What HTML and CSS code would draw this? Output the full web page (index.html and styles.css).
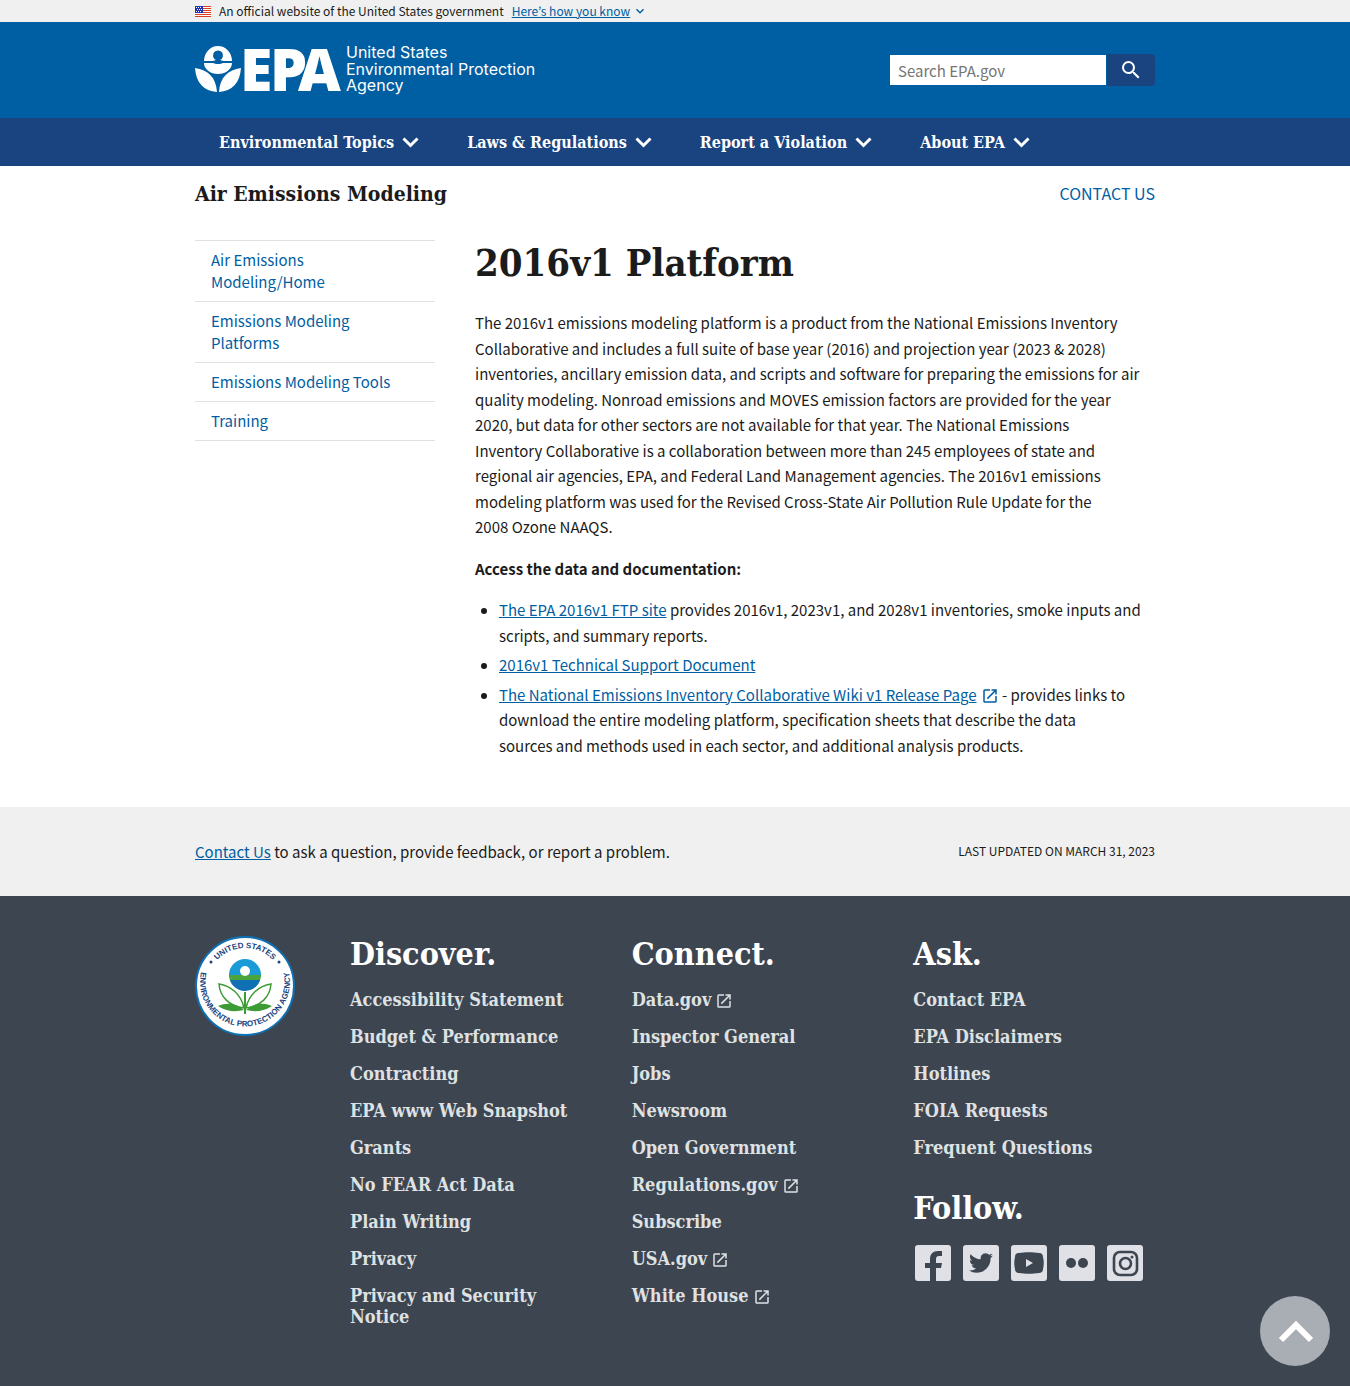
FILE: index.html
```html
<!DOCTYPE html>
<html lang="en">
<head>
<meta charset="utf-8">
<meta name="viewport" content="width=device-width, initial-scale=1">
<title>2016v1 Platform | US EPA</title>
<link rel="stylesheet" href="styles.css">
</head>
<body>
<svg class="sprite" aria-hidden="true">
  <symbol id="launch" viewBox="0 0 24 24"><path fill="currentColor" d="M19 19H5V5h7V3H5a2 2 0 0 0-2 2v14a2 2 0 0 0 2 2h14a2 2 0 0 0 2-2v-7h-2v7zM14 3v2h3.590l-9.830 9.830 1.410 1.410L19 6.410V10h2V3h-7z"/></symbol>
  <symbol id="expand" viewBox="0 0 24 24"><path fill="currentColor" d="M16.590 8.590 12 13.170 7.410 8.590 6 10l6 6 6-6z"/></symbol>
  <symbol id="chevron" viewBox="0 0 17 11"><path fill="none" stroke="currentColor" stroke-width="3" d="M1.500 1.500l7 7 7-7"/></symbol>
</svg>

<div class="gov-banner">
  <div class="container gov-banner-inner">
    <svg class="flag" viewBox="0 0 16 11" aria-hidden="true">
      <path fill="#fff" d="M0 0h16v11H0z"/>
      <path fill="#db3e1f" d="M0 0h16v1H0zM0 2h16v1H0zM0 4h16v1H0zM0 6h16v1H0zM0 8h16v1H0zM0 10h16v1H0z"/>
      <path fill="#1e33b1" d="M0 0h8v7H0z"/>
      <path fill="#fff" d="M1 1h1v1H1zM3 1h1v1H3zM5 1h1v1H5zM2 3h1v1H2zM4 3h1v1H4zM6 3h1v1H6zM1 5h1v1H1zM3 5h1v1H3zM5 5h1v1H5z"/>
    </svg>
    <span>An official website of the United States government</span>
    <button class="gov-button" type="button"><span>Here’s how you know</span><svg class="gov-caret" aria-hidden="true"><use href="#expand"/></svg></button>
  </div>
</div>

<header>
  <div class="masthead">
    <div class="container masthead-inner">
      <a class="logo" href="#" aria-label="US EPA home">
        <svg viewBox="0 0 350 50" width="350" height="50">
          <path fill="#fff" d="M9 16a14 15 0 0 1 28 0h-9l-3-1a5 5 0 1 0-4 0l-3 1z"/>
          <path fill="#fff" d="M9 18h9l3 1h4l3-1h9a14 11 0 0 1-28 0z"/>
          <path fill="#fff" d="M0 23c13 2 21 9 22 24C9 46 1 38 0 23zM46 23c-13 2-21 9-22 24 13-1 21-9 22-24z"/>
          <text class="logo-epa" x="45 75 103" y="46">EPA</text>
          <text class="logo-name" x="151" y="13">United States</text>
          <text class="logo-name" x="151" y="30">Environmental Protection</text>
          <text class="logo-name" x="151" y="46">Agency</text>
        </svg>
      </a>
      <form class="search" role="search">
        <input type="search" aria-label="Search EPA.gov" placeholder="Search EPA.gov">
        <button type="submit" aria-label="Search"><svg viewBox="0 0 24 24" width="24" height="24"><path fill="#fff" d="M15.500 14h-.790l-.280-.270A6.471 6.471 0 0 0 16 9.500 6.500 6.500 0 1 0 9.500 16c1.610 0 3.090-.590 4.230-1.570l.270.280v.790l5 4.990L20.490 19l-4.990-5zm-6 0C7.010 14 5 11.990 5 9.500S7.010 5 9.500 5 14 7.010 14 9.500 11.990 14 9.500 14z"/></svg></button>
      </form>
    </div>
  </div>
  <nav class="main-nav" aria-label="Primary">
    <div class="container main-nav-inner">
      <button type="button">Environmental Topics<svg aria-hidden="true"><use href="#chevron"/></svg></button>
      <button type="button">Laws &amp; Regulations<svg aria-hidden="true"><use href="#chevron"/></svg></button>
      <button type="button">Report a Violation<svg aria-hidden="true"><use href="#chevron"/></svg></button>
      <button type="button">About EPA<svg aria-hidden="true"><use href="#chevron"/></svg></button>
    </div>
  </nav>
</header>

<div class="container">
  <div class="area-bar">
    <div class="area-title">Air Emissions Modeling</div>
    <a class="area-contact" href="#">CONTACT US</a>
  </div>
  <div class="page">
    <nav class="side-nav" aria-label="Section">
      <ul>
        <li><a href="#">Air Emissions Modeling/Home</a></li>
        <li><a href="#">Emissions Modeling Platforms</a></li>
        <li><a href="#">Emissions Modeling Tools</a></li>
        <li><a href="#">Training</a></li>
      </ul>
    </nav>
    <main>
      <h1>2016v1 Platform</h1>
      <p>The 2016v1 emissions modeling platform is a product from the National Emissions Inventory Collaborative and includes a full suite of base year (2016) and projection year (2023 &amp; 2028) inventories, ancillary emission data, and scripts and software for preparing the emissions for air quality modeling. Nonroad emissions and MOVES emission factors are provided for the year 2020, but data for other sectors are not available for that year. The National Emissions Inventory&nbsp;Collaborative is a collaboration between more than 245 employees of state and regional air agencies, EPA, and Federal Land Management agencies. The 2016v1 emissions modeling platform was used for the Revised Cross-State Air Pollution Rule Update for the 2008&nbsp;Ozone NAAQS.</p>
      <p><strong>Access the data and documentation:</strong></p>
      <ul>
        <li><a href="#">The EPA 2016v1 FTP site</a> provides 2016v1, 2023v1, and 2028v1 inventories, smoke inputs and scripts, and summary reports.</li>
        <li><a href="#">2016v1 Technical Support Document</a></li>
        <li><a href="#">The National Emissions Inventory Collaborative Wiki v1 Release Page</a><svg class="ext" aria-hidden="true"><use href="#launch"/></svg> - provides links to download the entire modeling platform, specification sheets that describe the data sources&nbsp;and methods used in each sector, and additional analysis products.</li>
      </ul>
    </main>
  </div>
</div>

<div class="feedback">
  <div class="container feedback-inner">
    <div><a href="#">Contact Us</a> to ask a question, provide feedback, or report a problem.</div>
    <div class="updated">LAST UPDATED ON MARCH 31, 2023</div>
  </div>
</div>

<footer>
  <div class="container footer-inner">
    <svg class="seal" viewBox="0 0 100 100" width="100" height="100" role="img" aria-label="EPA seal">
      <defs>
        <path id="seal-top" d="M12 50a38 38 0 0 1 76 0"/>
        <path id="seal-bottom" d="M9 27A45 45 0 1 0 91 27"/>
        <clipPath id="orb"><circle cx="50" cy="39" r="16"/></clipPath>
      </defs>
      <circle cx="50" cy="50" r="49" fill="#fff" stroke="#0f71b4" stroke-width="2"/>
      <g clip-path="url(#orb)">
        <path fill="#1a9ad7" d="M34 23h32v18H34z"/>
        <path fill="#4aa63c" d="M34 39h32v5H34z"/>
        <path fill="#0f71b4" d="M34 44h32v13H34z"/>
      </g>
      <circle cx="50" cy="35" r="5" fill="#fff"/>
      <g fill="none" stroke="#3d9b35" stroke-width="1.500">
        <path d="M49 72C46 58 36 50 24 48c1 13 10 22 25 24zM51 72c3-14 13-22 25-24-1 13-10 22-25 24z"/>
        <path d="M50 56v22" stroke-width="2"/>
      </g>
      <path fill="#3d9b35" d="M49 74c-8-7-17-8-26-4 9 6 18 6 26 4zM51 74c8-7 17-8 26-4-9 6-18 6-26 4z"/>
      <g class="seal-text">
        <text text-anchor="middle"><textPath href="#seal-top" startOffset="50%">UNITED STATES</textPath></text>
        <text text-anchor="middle"><textPath href="#seal-bottom" startOffset="50%">ENVIRONMENTAL PROTECTION AGENCY</textPath></text>
      </g>
      <circle cx="16" cy="26" r="1.500" fill="#1a4480"/><circle cx="84" cy="26" r="1.500" fill="#1a4480"/>
    </svg>
    <div class="footer-cols">
      <section>
        <h2>Discover.</h2>
        <ul>
          <li><a href="#">Accessibility Statement</a></li>
          <li><a href="#">Budget &amp; Performance</a></li>
          <li><a href="#">Contracting</a></li>
          <li><a href="#">EPA www Web Snapshot</a></li>
          <li><a href="#">Grants</a></li>
          <li><a href="#">No FEAR Act Data</a></li>
          <li><a href="#">Plain Writing</a></li>
          <li><a href="#">Privacy</a></li>
          <li><a href="#">Privacy and Security Notice</a></li>
        </ul>
      </section>
      <section>
        <h2>Connect.</h2>
        <ul>
          <li><a href="#">Data.gov<svg class="ext" aria-hidden="true"><use href="#launch"/></svg></a></li>
          <li><a href="#">Inspector General</a></li>
          <li><a href="#">Jobs</a></li>
          <li><a href="#">Newsroom</a></li>
          <li><a href="#">Open Government</a></li>
          <li><a href="#">Regulations.gov<svg class="ext" aria-hidden="true"><use href="#launch"/></svg></a></li>
          <li><a href="#">Subscribe</a></li>
          <li><a href="#">USA.gov<svg class="ext" aria-hidden="true"><use href="#launch"/></svg></a></li>
          <li><a href="#">White House<svg class="ext" aria-hidden="true"><use href="#launch"/></svg></a></li>
        </ul>
      </section>
      <div>
        <section>
          <h2>Ask.</h2>
          <ul>
            <li><a href="#">Contact EPA</a></li>
            <li><a href="#">EPA Disclaimers</a></li>
            <li><a href="#">Hotlines</a></li>
            <li><a href="#">FOIA Requests</a></li>
            <li><a href="#">Frequent Questions</a></li>
          </ul>
        </section>
        <section class="follow">
          <h2>Follow.</h2>
          <div class="social">
            <a href="#" aria-label="Facebook"><svg viewBox="0 0 36 36"><rect width="36" height="36" rx="3" fill="#dfe1e6"/><path fill="#3d4551" d="M15 36V23h-5v-5h5v-4c0-5 3-8 8-8h4v5h-3c-2 0-3 1-3 3v4h6l-1 5h-5v13z"/></svg></a>
            <a href="#" aria-label="Twitter"><svg viewBox="0 0 36 36"><rect width="36" height="36" rx="3" fill="#dfe1e6"/><path fill="#3d4551" transform="translate(6 6)" d="M23.953 4.570a10 10 0 0 1-2.825.775 4.958 4.958 0 0 0 2.163-2.723c-.951.555-2.005.959-3.127 1.184a4.920 4.920 0 0 0-8.384 4.482C7.690 8.095 4.067 6.130 1.640 3.162a4.822 4.822 0 0 0-.666 2.475c0 1.710.870 3.213 2.188 4.096a4.904 4.904 0 0 1-2.228-.616v.060a4.923 4.923 0 0 0 3.946 4.827 4.996 4.996 0 0 1-2.212.085 4.936 4.936 0 0 0 4.604 3.417 9.867 9.867 0 0 1-6.102 2.105c-.390 0-.779-.023-1.170-.067a13.995 13.995 0 0 0 7.557 2.209c9.053 0 13.998-7.496 13.998-13.985 0-.210 0-.420-.015-.630z"/></svg></a>
            <a href="#" aria-label="YouTube"><svg viewBox="0 0 36 36"><rect width="36" height="36" rx="3" fill="#dfe1e6"/><path fill="#3d4551" d="M8 8c6-1 14-1 20 0 3 0 4 2 4 4 1 4 1 8 0 12 0 2-1 4-4 4-6 1-14 1-20 0-3 0-4-2-4-4-1-4-1-8 0-12 0-2 1-4 4-4z"/><path fill="#dfe1e6" d="M15 14v8l7-4z"/></svg></a>
            <a href="#" aria-label="Flickr"><svg viewBox="0 0 36 36"><rect width="36" height="36" rx="3" fill="#dfe1e6"/><circle cx="12" cy="18" r="5" fill="#3d4551"/><circle cx="24" cy="18" r="5" fill="#3d4551"/></svg></a>
            <a href="#" aria-label="Instagram"><svg viewBox="0 0 36 36"><rect width="36" height="36" rx="3" fill="#dfe1e6"/><g fill="none" stroke="#3d4551" stroke-width="2.600"><rect x="7" y="7" width="23" height="23" rx="6"/><circle cx="18.500" cy="18.500" r="5.500"/></g><circle cx="25" cy="12" r="1.500" fill="#3d4551"/></svg></a>
          </div>
        </section>
      </div>
    </div>
  </div>
</footer>
<a class="to-top" href="#" aria-label="Back to top"><svg viewBox="0 0 70 70"><path d="M21 44l15-15 15 15" fill="none" stroke="#fff" stroke-width="6"/></svg></a>
</body>
</html>
```
FILE: styles.css
```css
:root {
  --sans: "Noto Sans CJK KR", "Noto Sans", sans-serif;
  --serif: "DejaVu Serif Condensed", "DejaVu Serif", serif;
  --link: #005ea2;
  --slate: #3d4551;
}
* { box-sizing: border-box; }
body {
  margin: 0;
  color: #1b1b1b;
  background: #fff;
  font: 15px/1.7 var(--sans);
}
a { color: var(--link); text-decoration-thickness: 1px; text-underline-offset: 1px; }
ul { margin: 0; padding: 0; }
button { font: inherit; border: 0; cursor: pointer; }
.sprite { display: none; }
.container { max-width: 1024px; margin: 0 auto; padding: 0 32px; }

.gov-banner { background: #f0f0f0; font-size: 12px; line-height: 22px; }
.gov-banner-inner { display: flex; align-items: center; gap: 8px; }
.flag { width: 16px; height: 11px; }
.gov-button { display: flex; align-items: center; gap: 2px; padding: 0; background: none; color: var(--link); }
.gov-button span { text-decoration: underline 1px; text-underline-offset: 1px; }
.gov-caret { width: 16px; height: 16px; }

.masthead { background: #005ea2; }
.masthead-inner { display: flex; align-items: center; justify-content: space-between; min-height: 96px; }
.logo { display: flex; }
.logo svg { overflow: visible; }
.logo-epa { font: 900 59px "Noto Sans", sans-serif; fill: #fff; }
.logo-name { font: 16px Inter, sans-serif; fill: #fff; }
.search { display: flex; }
.search input {
  width: 218px; height: 32px; padding: 0 8px;
  border: 1px solid #005ea2; border-radius: 0; background: #fff;
  font: 15px var(--sans); color: #1b1b1b;
}
.search input::placeholder { color: #757575; opacity: 1; }
.search button {
  display: flex; align-items: center; justify-content: center;
  width: 48px; height: 32px; padding: 0;
  background: #1a4480; border-radius: 0 4px 4px 0;
}

.main-nav { background: #1a4480; }
.main-nav-inner { display: flex; }
.main-nav button {
  display: flex; align-items: center; gap: 8px;
  height: 48px; padding: 0 24px;
  background: none; color: #fff;
  font: bold 16px var(--serif);
}
.main-nav svg { width: 17px; height: 11px; }

.area-bar { display: flex; align-items: center; justify-content: space-between; min-height: 56px; }
.area-title { font: bold 21px/32px var(--serif); }
.area-contact { font-size: 16px; text-decoration: none; }

.page { display: grid; grid-template-columns: 240px 1fr; gap: 40px; padding: 18px 0 45px; }
.side-nav ul { list-style: none; border-bottom: 1px solid #dfe1e2; }
.side-nav li { border-top: 1px solid #dfe1e2; }
.side-nav a { display: block; padding: 8px 32px 8px 16px; line-height: 22px; text-decoration: none; }
main { max-width: 668px; }
main h1 { margin: 0 0 24px; font: bold 38px/46px var(--serif); }
main p { margin: 0 0 16px; }
main ul { padding-left: 24px; }
main li { margin-bottom: 4px; }
.ext { width: 18px; height: 18px; margin-left: 4px; vertical-align: -4px; color: var(--link); }

.feedback { background: #f0f0f0; }
.feedback-inner { display: flex; align-items: center; justify-content: space-between; min-height: 89px; }
.updated { font-size: 12px; }

footer { background: var(--slate); color: #fff; }
.footer-inner { display: flex; gap: 55px; padding-top: 40px; padding-bottom: 42px; }
.seal { flex: none; }
.seal-text { font: bold 8px "Liberation Sans", sans-serif; fill: #1a4480; }
.footer-cols { flex: 1; display: grid; grid-template-columns: repeat(3, 1fr); gap: 40px; }
footer h2 { margin: 0 0 16px; font: bold 32px/37px var(--serif); }
footer ul { list-style: none; font: bold 18px/21px var(--serif); }
footer li { margin-bottom: 16px; }
footer li a { color: #dfe1e2; text-decoration: none; }
footer .ext { color: #dfe1e2; }
.follow { padding-top: 16px; }
.social { display: flex; gap: 12px; padding: 2px 0 0 2px; }
.social a, .social svg { display: block; width: 36px; height: 36px; }

.to-top { position: fixed; right: 20px; bottom: 20px; width: 70px; height: 70px; border-radius: 50%; background: #a9aeb5; }
.to-top svg { display: block; }
@media (min-height: 1300px) {
  body { display: flex; flex-direction: column; min-height: 100vh; }
  body > .container, .gov-banner-inner { width: 100%; }
  footer { flex: 1; }
}
```
